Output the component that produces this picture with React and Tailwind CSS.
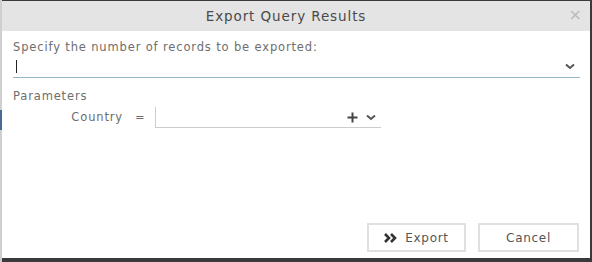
import React from "react";

const Chevron = ({ className = "" }) => (
  <svg width="10" height="7" viewBox="0 0 10 7" className={className}>
    <path d="M1 1.5 L5 5 L9 1.5" fill="none" stroke="#555" strokeWidth="2" />
  </svg>
);

export default function App() {
  return (
    <div
      className="w-[592px] h-[262px] bg-[#3a3a3a] relative overflow-hidden"
      style={{ fontFamily: '"DejaVu Sans", Verdana, sans-serif' }}
    >
      <div className="absolute left-0 top-0 w-[2px] h-full bg-[#cfcfcf]" />
      <div className="absolute left-0 top-[110px] w-[2px] h-[20px] bg-[#4a6a95]" />
      <div className="ml-[2px] mt-[1px] w-[588px] h-[257px] bg-white flex flex-col">
        <div className="h-[30px] bg-[#e4e4e4] flex items-center justify-center relative pr-[20px]">
          <span className="text-[13.5px] tracking-[0.9px] text-[#4a4a4a]">Export Query Results</span>
          <span className="absolute right-[8px] top-[6px] text-[16px] leading-none text-[#bbb]">×</span>
        </div>
        <div className="flex-1 flex flex-col px-[11px] pt-[10px]">
          <div className="text-[11.5px] tracking-[0.85px] text-[#6e6e6e] leading-[13px]">
            Specify the number of records to be exported:
          </div>
          <div className="mt-[2px] h-[22px] w-[567px] border-b border-[#93b6c6] flex items-center justify-between pl-[3px] pr-[5px]">
            <span className="w-px h-[13px] bg-[#222]" />
            <Chevron />
          </div>
          <div className="mt-[12px] text-[11.5px] tracking-[0.85px] text-[#6e6e6e] leading-[13px]">Parameters</div>
          <div className="mt-[4px] flex items-center">
            <span className="w-[110px] text-right text-[11.5px] tracking-[0.85px] text-[#6e6e6e]">Country</span>
            <span className="ml-[12px] w-[20px] text-[11.5px] text-[#6e6e6e]">=</span>
            <div className="h-[21px] w-[226px] border-l border-b border-[#ccc] flex items-center justify-end gap-[8px] pr-[5px]">
              <svg width="11" height="11" viewBox="0 0 11 11">
                <path d="M5.5 0.5 V10.5 M0.5 5.5 H10.5" stroke="#444" strokeWidth="2" />
              </svg>
              <Chevron />
            </div>
          </div>
          <div className="mt-auto mb-[6px] flex justify-end gap-[12px]">
            <button className="w-[99px] h-[29px] border-2 border-[#e0e0e0] bg-white flex items-center justify-center gap-[7px] text-[12px] tracking-[0.7px] text-[#555]">
              <svg width="14" height="10" viewBox="0 0 14 10">
                <path d="M1 1 L5 5 L1 9 M7 1 L11 5 L7 9" fill="none" stroke="#333" strokeWidth="2.6" />
              </svg>
              Export
            </button>
            <button className="w-[101px] h-[29px] border-2 border-[#e0e0e0] bg-white flex items-center justify-center text-[12px] tracking-[0.7px] text-[#555]">
              Cancel
            </button>
          </div>
        </div>
      </div>
    </div>
  );
}
